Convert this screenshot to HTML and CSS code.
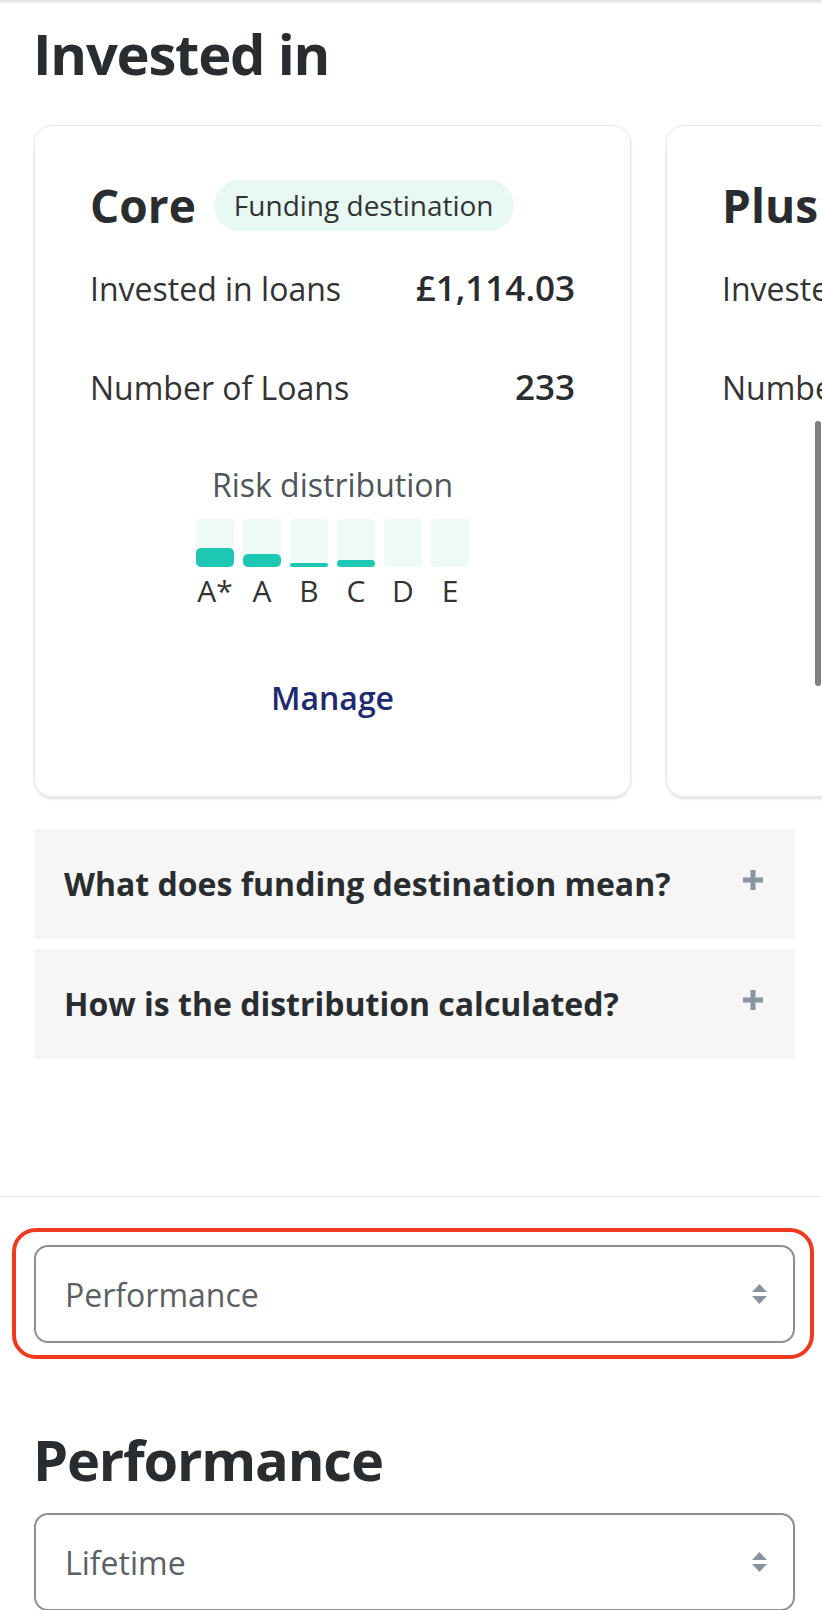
FILE: index.html
```html
<!DOCTYPE html>
<html lang="en">
<head>
    <meta charset="UTF-8">
    <meta name="viewport" content="width=device-width, initial-scale=1.0">
    <title>Invested in</title>
    <link rel="stylesheet" href="styles.css">
</head>
<body>
    <div class="topbar"></div>

    <main class="page">
        <section class="invested">
            <h2 class="section-title">Invested in</h2>

            <div class="carousel">
                <div class="card">
                    <div class="card-head">
                        <span class="card-name">Core</span>
                        <span class="badge">Funding destination</span>
                    </div>
                    <div class="stats">
                        <div class="stat">
                            <span>Invested in loans</span>
                            <span class="stat-value">£1,114.03</span>
                        </div>
                        <div class="stat">
                            <span>Number of Loans</span>
                            <span class="stat-value">233</span>
                        </div>
                    </div>
                    <div class="risk">
                        <div class="risk-title">Risk distribution</div>
                        <div class="bars">
                            <div class="bar"><div class="bar-fill" style="height: 19px"></div></div>
                            <div class="bar"><div class="bar-fill" style="height: 13px"></div></div>
                            <div class="bar"><div class="bar-fill" style="height: 4px"></div></div>
                            <div class="bar"><div class="bar-fill" style="height: 7px"></div></div>
                            <div class="bar"></div>
                            <div class="bar"></div>
                        </div>
                        <div class="bar-labels">
                            <span>A*</span><span>A</span><span>B</span><span>C</span><span>D</span><span>E</span>
                        </div>
                    </div>
                    <a class="manage" href="#">Manage</a>
                </div>

                <div class="card">
                    <div class="card-head">
                        <span class="card-name">Plus</span>
                    </div>
                    <div class="stats">
                        <div class="stat">
                            <span>Invested in loans</span>
                            <span class="stat-value">£0.00</span>
                        </div>
                        <div class="stat">
                            <span>Number of Loans</span>
                            <span class="stat-value">0</span>
                        </div>
                    </div>
                    <div class="risk">
                        <div class="risk-title">Risk distribution</div>
                        <div class="bars">
                            <div class="bar"></div>
                            <div class="bar"></div>
                            <div class="bar"></div>
                            <div class="bar"></div>
                            <div class="bar"></div>
                            <div class="bar"></div>
                        </div>
                        <div class="bar-labels">
                            <span>A*</span><span>A</span><span>B</span><span>C</span><span>D</span><span>E</span>
                        </div>
                    </div>
                    <a class="manage" href="#">Manage</a>
                </div>
            </div>

            <div class="faq">
                <div class="faq-item">
                    <span>What does funding destination mean?</span>
                    <svg class="plus" width="20" height="20" viewBox="0 0 20 20"><rect x="7.5" y="0" width="5" height="20" fill="currentColor"/><rect x="0" y="7.5" width="20" height="5" fill="currentColor"/></svg>
                </div>
                <div class="faq-item">
                    <span>How is the distribution calculated?</span>
                    <svg class="plus" width="20" height="20" viewBox="0 0 20 20"><rect x="7.5" y="0" width="5" height="20" fill="currentColor"/><rect x="0" y="7.5" width="20" height="5" fill="currentColor"/></svg>
                </div>
            </div>
        </section>

        <hr class="divider">

        <div class="highlight">
            <div class="select">
                <span>Performance</span>
                <svg class="arrows" width="15" height="20" viewBox="0 0 15 20"><path d="M7.5 0 L15 8 H0 Z" fill="currentColor"/><path d="M0 12 H15 L7.5 20 Z" fill="currentColor"/></svg>
            </div>
        </div>

        <section class="performance">
            <h2 class="section-title">Performance</h2>
            <div class="select select-period">
                <span>Lifetime</span>
                <svg class="arrows" width="15" height="20" viewBox="0 0 15 20"><path d="M7.5 0 L15 8 H0 Z" fill="currentColor"/><path d="M0 12 H15 L7.5 20 Z" fill="currentColor"/></svg>
            </div>
        </section>
    </main>

    <div class="scroll-thumb"></div>
</body>
</html>
```

FILE: styles.css
```css
body {
    font-family: 'Open Sans', 'Noto Sans', sans-serif;
    background-color: #fff;
    color: #333;
    margin: 0;
    padding: 0;
}

.topbar {
    height: 4px;
    background: linear-gradient(#dedede, #fff);
}

.page {
    padding-top: 16px;
    overflow: hidden;
}

.section-title {
    margin: 0 0 0 33px;
    font-size: 56px;
    font-weight: bold;
    line-height: 67px;
    letter-spacing: -1.2px;
    color: #2a2d30;
}

.carousel {
    display: flex;
    gap: 35px;
    overflow: hidden;
    margin-top: 38px;
    padding: 0 0 4px 34px;
}

.card {
    flex: 0 0 597px;
    box-sizing: border-box;
    padding: 52px 55px 74px;
    border: 1px solid #e8e8e8;
    border-radius: 18px;
    box-shadow: 0 2px 3px rgba(0, 0, 0, 0.12);
}

.card-head {
    display: flex;
    align-items: center;
    gap: 18px;
    white-space: nowrap;
}

.card-name {
    font-size: 46px;
    font-weight: bold;
    line-height: 55px;
    color: #2a2d30;
}

.badge {
    font-size: 28px;
    line-height: 51px;
    padding: 0 20px;
    background-color: #e8f8f2;
    border-radius: 26px;
    color: #333;
}

.stats {
    display: flex;
    flex-direction: column;
    gap: 50px;
    margin-top: 31px;
}

.stat {
    display: flex;
    justify-content: space-between;
    align-items: baseline;
    font-size: 32px;
    line-height: 48px;
    white-space: nowrap;
}

.stat-value {
    font-size: 35px;
    font-weight: 600;
    color: #2a2d30;
}

.risk {
    margin-top: 49px;
    text-align: center;
}

.risk-title {
    font-size: 32px;
    line-height: 48px;
    color: #4f555a;
}

.bars,
.bar-labels {
    display: flex;
    justify-content: center;
    gap: 9px;
}

.bars {
    margin-top: 10px;
}

.bar {
    width: 38px;
    height: 48px;
    display: flex;
    align-items: flex-end;
    background-color: #eefaf6;
    border-radius: 4px;
}

.bar-fill {
    width: 100%;
    background-color: #1ec7b4;
    border-radius: 5px;
}

.bar-labels {
    margin-top: 3px;
}

.bar-labels span {
    width: 38px;
    font-size: 30px;
    line-height: 41px;
    color: #333;
}

.manage {
    display: block;
    margin-top: 63px;
    text-align: center;
    font-size: 32px;
    font-weight: 600;
    line-height: 48px;
    color: #1e2a6e;
    text-decoration: none;
}

.faq {
    display: flex;
    flex-direction: column;
    gap: 10px;
    margin: 28px 27px 0 34px;
}

.faq-item {
    display: flex;
    justify-content: space-between;
    align-items: flex-start;
    padding: 31px 32px 31px 30px;
    background-color: #f6f6f6;
    font-size: 32px;
    font-weight: bold;
    line-height: 48px;
    color: #2a2d30;
}

.plus {
    margin-top: 10px;
    color: #8b939c;
}

.divider {
    margin: 137px 0 0;
    border: none;
    border-top: 1px solid #ececec;
}

.highlight {
    box-sizing: border-box;
    width: 802px;
    margin: 31px 0 0 12px;
    padding: 13px 15px 12px 18px;
    border: 4px solid #f03a1e;
    border-radius: 24px;
}

.select {
    box-sizing: border-box;
    height: 98px;
    display: flex;
    align-items: center;
    justify-content: space-between;
    padding: 0 26px 0 29px;
    border: 2px solid #8c9096;
    border-radius: 14px;
    font-size: 32px;
    color: #5b6066;
}

.arrows {
    color: #8a929b;
}

.performance {
    margin-top: 67px;
}

.select-period {
    margin: 20px 27px 0 34px;
}

.scroll-thumb {
    position: fixed;
    top: 421px;
    right: 1px;
    width: 6px;
    height: 265px;
    background-color: #7e7e7e;
    border-radius: 3px;
}
```
